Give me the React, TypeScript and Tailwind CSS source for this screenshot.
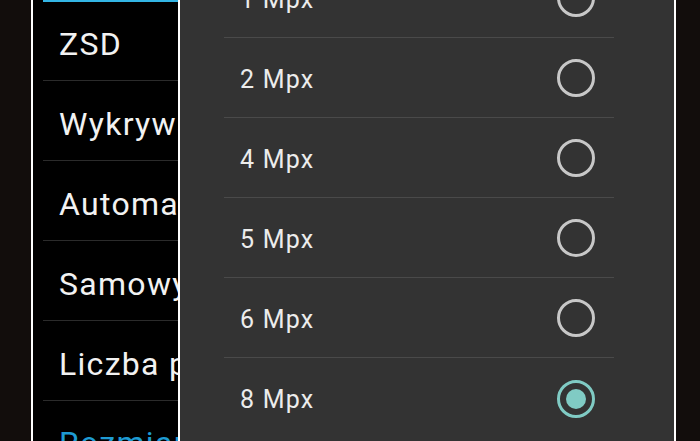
import React from 'react';

const settings = ['ZSD', 'Wykrywanie twarzy', 'Automatyczna ekspozycja', 'Samowyzwalacz', 'Liczba powtórzeń'];
const sizes = ['1 Mpx', '2 Mpx', '4 Mpx', '5 Mpx', '6 Mpx', '8 Mpx'];

function Radio({ checked }: { checked: boolean }) {
    return (
        <svg width="40" height="40" viewBox="0 0 40 40">
            {checked ? (
                <>
                    <circle cx="20" cy="20" r="17.5" fill="none" stroke="#80cbc4" strokeWidth="3" />
                    <circle cx="20" cy="20" r="10" fill="#80cbc4" />
                </>
            ) : (
                <circle cx="20" cy="20" r="17.5" fill="none" stroke="#c8c8c8" strokeWidth="3" />
            )}
        </svg>
    );
}

export default function App() {
    return (
        <div className="flex w-[700px] h-[441px] overflow-hidden bg-[#130e0c]" style={{ fontFamily: 'Roboto, "Noto Sans", sans-serif' }}>
            {/* Left frame */}
            <div className="w-[31px] shrink-0 bg-[#120d0c]" />
            <div className="w-[2px] shrink-0 bg-white" />

            {/* Settings screen */}
            <div className="relative w-[643px] shrink-0 bg-black overflow-hidden">
                <div className="pl-[10px]">
                    <div className="h-[2px] bg-[#33b5e5]" />
                    {settings.map((s, i) => (
                        <div
                            key={s}
                            className={`flex items-center pl-[16px] pt-[6px] text-[32px] tracking-[1.3px] text-[#f2f2f2] whitespace-nowrap border-b border-[#2b2b2b] ${i === 0 ? 'h-[79px]' : 'h-[80px]'}`}
                        >
                            {s}
                        </div>
                    ))}
                    <div className="flex items-center h-[80px] pl-[16px] pt-[4px] text-[32px] tracking-[1.3px] text-[#1e9bd3] whitespace-nowrap">
                        Rozmiar zdjęcia
                    </div>
                </div>

                {/* Dialog overlay */}
                <div className="absolute top-0 bottom-0 left-[145px] right-0 bg-[#333333] border-x-2 border-white">
                    <div className="-mt-[42px] pl-[44px] pr-[60px]">
                        {sizes.map((s, i) => (
                            <div
                                key={s}
                                className={`flex items-center justify-between h-[80px] pl-[16px] pr-[19px] ${i < sizes.length - 1 ? 'border-b border-[#4a4a4a]' : ''}`}
                            >
                                <span className="text-[25px] tracking-[1.2px] text-[#ececec] pt-[4px]">{s}</span>
                                <span className="-mr-[1px] pt-[1px]">
                                    <Radio checked={s === '8 Mpx'} />
                                </span>
                            </div>
                        ))}
                    </div>
                </div>
            </div>

            <div className="flex-1 bg-[#120d0c]" />
        </div>
    );
}
